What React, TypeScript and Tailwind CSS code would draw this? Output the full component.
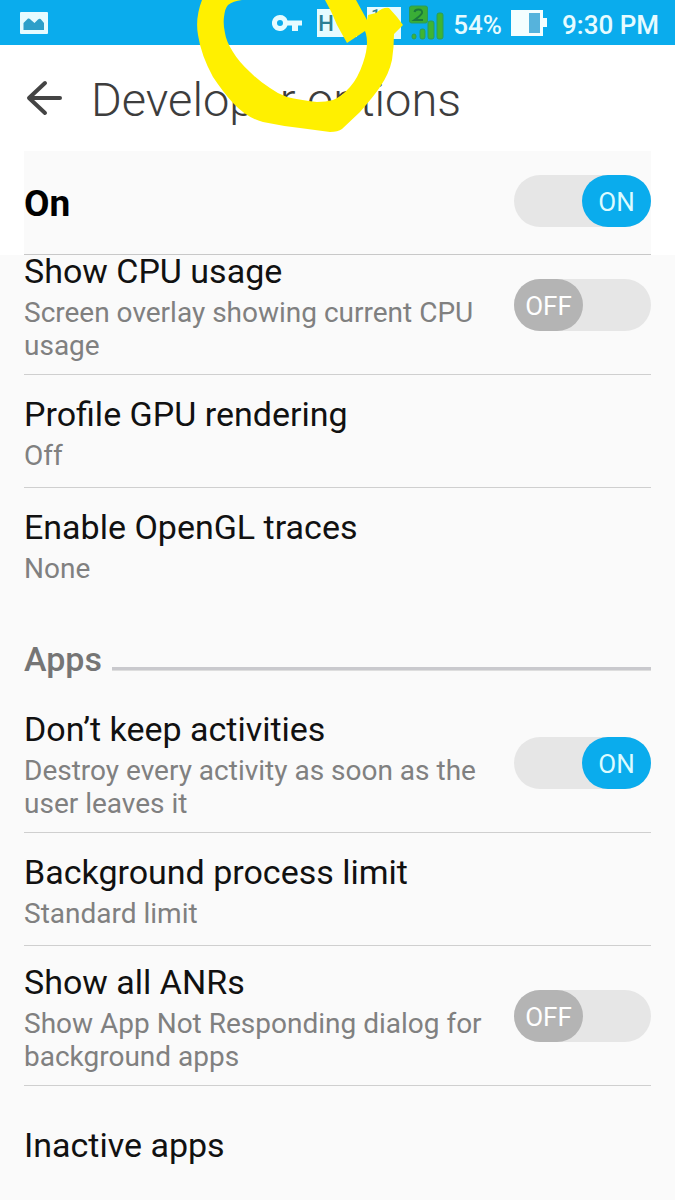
// ============================================================
// DEVELOPER OPTIONS — settings screen
// StatusBar: icons, battery and clock
// Toggle: ON/OFF switch
// SettingRow: title + summary, optional switch
// ============================================================

import { useId, useState } from "react";

// ── Props ──
interface ToggleProps {
  id: string;
  label: string;
  initial: boolean;
}

interface Setting {
  title: string;
  summary?: string;
  toggle?: boolean; // initial switch state, left out for plain rows
}

interface SettingRowProps extends Setting {
  last?: boolean;
}

const MONITORING: Setting[] = [
  { title: "Show CPU usage", summary: "Screen overlay showing current CPU usage", toggle: false },
  { title: "Profile GPU rendering", summary: "Off" },
  { title: "Enable OpenGL traces", summary: "None" },
];

const APPS: Setting[] = [
  { title: "Don’t keep activities", summary: "Destroy every activity as soon as the user leaves it", toggle: true },
  { title: "Background process limit", summary: "Standard limit" },
  { title: "Show all ANRs", summary: "Show App Not Responding dialog for background apps", toggle: false },
  { title: "Inactive apps" },
];

// ── StatusBar ──
function StatusBar() {
  return (
    <div className="flex h-[45px] items-center bg-[#0aaced] pl-5 pr-4 text-[26px] font-medium leading-8 text-[#e6fbff]">
      {/* Screenshot notification */}
      <svg className="h-[22px] w-7" viewBox="0 0 28 22" aria-hidden="true">
        <rect width="28" height="22" rx="1" fill="#e6fbff" />
        <path d="M3.500 18V11L8 6.500Q10 6 11 8L14.500 11L18 7.500Q20 6 21.500 8L24 11V18Z" fill="#2d9fc9" />
      </svg>

      <div className="ml-auto flex items-center">
        {/* VPN key */}
        <svg className="h-4 w-[30px]" viewBox="0 0 30 16" fill="#e6fbff" aria-hidden="true">
          <path fillRule="evenodd" d="M8 0a8 8 0 1 0 7.500 10.500H20V16H26V10.500H30V5.500H15.500A8 8 0 0 0 8 0ZM8 5a3 3 0 1 1 0 6a3 3 0 0 1 0-6Z" />
        </svg>
        {/* Network badges */}
        <span className="ml-[15px] flex h-7 w-10 items-center bg-[#e6fbff] pl-px pt-0.5 text-[22px] font-medium text-[#2b7f94]">H</span>
        <span className="ml-[10px] flex h-8 w-[34px] items-start bg-[#e6fbff] pl-1 pt-px text-base font-medium leading-4 text-[#2b7f94]">1</span>
        {/* Second SIM signal */}
        <svg className="ml-2 h-9 w-9" viewBox="0 0 36 36" aria-hidden="true">
          <rect x="0.500" y="1" width="18" height="17" rx="2" fill="#3aae36" stroke="#2a9d5a" />
          <path d="M5.500 7Q6 4.500 9.500 4.500Q13.500 4.500 13 8Q12.500 10 5.500 15H14" fill="none" stroke="#1b7a3c" strokeWidth="2" />
          <g fill="#3fb532" stroke="#2a9d5a" strokeWidth="1">
            <rect x="3" y="29" width="4" height="5" rx="2" />
            <rect x="11" y="24" width="5" height="10" rx="2" />
            <rect x="19" y="16" width="6" height="18" rx="2" />
            <rect x="28" y="8" width="6" height="26" rx="2" />
          </g>
        </svg>
        <span className="ml-2 pt-1">54%</span>
        {/* Battery */}
        <svg className="ml-[9px] h-[26px] w-9" viewBox="0 0 36 26" aria-hidden="true">
          <path d="M0 0H32V8H36V17H32V26H0Z" fill="#f4feff" />
          <rect x="18" y="3" width="11" height="20" fill="#56b3dc" />
        </svg>
        <span className="ml-[15px] pt-1">9:30 PM</span>
      </div>
    </div>
  );
}

// ── Marker: hand-drawn loop around the key icon ──
function Marker() {
  return (
    <svg className="pointer-events-none absolute right-[270px] top-0 z-20 h-[134px] w-[210px]" viewBox="195 0 210 134" fill="#fff000" aria-hidden="true">
      <path d="M202 0Q195 18 198 35Q201 55 213 77Q223 92 233 103Q247 118 263 122Q282 126 300 128L330 132Q338 132 342 129L360 112Q374 96 380 87Q389 74 392 60Q394 47 394 34L403 25L397 17L389 8Q383 7 376 13L368 15L367 20L356 0H325Q332 12 337 25L347 43L365 31L366 34Q369 46 363 63Q358 78 350 87Q341 97 333 100Q326 102 317 102Q300 100 287 97Q278 94 270 88Q260 82 250 72Q239 62 233 52Q226 41 225 33Q223 24 224 17Q225 8 228 5Q233 1 242 0Z" />
    </svg>
  );
}

// ── Toggle ──
function Toggle({ id, label, initial }: ToggleProps) {
  const [on, setOn] = useState(initial);

  return (
    <span className="relative block h-[52px] w-[137px] shrink-0">
      <input
        id={id}
        type="checkbox"
        role="switch"
        aria-label={label}
        checked={on}
        onChange={() => setOn((v) => !v)}
        className="block h-full w-full cursor-pointer appearance-none rounded-full bg-[#e6e6e6]"
      />
      <span
        aria-hidden="true"
        className={`pointer-events-none absolute inset-y-0 flex w-[69px] items-center justify-center rounded-full pt-0.5 text-[26px] leading-8 ${
          on ? "right-0 bg-[#0aaced] text-[#dcfbff]" : "left-0 bg-[#b4b4b4] text-white"
        }`}
      >
        {on ? "ON" : "OFF"}
      </span>
    </span>
  );
}

// ── SettingRow ──
function SettingRow({ title, summary, toggle, last }: SettingRowProps) {
  const id = useId();
  const text = (
    <>
      <span className="block text-[34px] leading-8 text-[#111111]">{title}</span>
      {summary && <span className="mt-[9px] block text-[28px] leading-[33px] text-[#808080]">{summary}</span>}
    </>
  );

  return (
    <li
      className={`flex items-center gap-6 border-b py-3 ${summary ? "min-h-[113px]" : "min-h-[110px]"} ${
        last ? "border-transparent" : "border-[#cfcfcf]"
      }`}
    >
      {toggle === undefined ? (
        <button type="button" className="flex-1 cursor-pointer pt-2 text-left">{text}</button>
      ) : (
        <>
          <label htmlFor={id} className="flex-1 cursor-pointer pt-2">{text}</label>
          <Toggle id={id} label={title} initial={toggle} />
        </>
      )}
    </li>
  );
}

export default function App() {
  return (
    <div className="relative min-h-screen overflow-hidden bg-[#fafafa] font-[Roboto,sans-serif]">
      <Marker />

      {/* Header stays above the scrolled list */}
      <header className="relative z-10 bg-white">
        <StatusBar />
        <div className="flex h-[106px] items-center gap-7 pl-[26px]">
          <button type="button" aria-label="Back" className="cursor-pointer">
            <svg className="h-9 w-[37px]" viewBox="0 0 37 36" fill="none" stroke="#444444" strokeWidth="4" strokeLinecap="round" strokeLinejoin="round" aria-hidden="true">
              <path d="M34 18H4M19 3L3 18L19 33" />
            </svg>
          </button>
          <h1 className="whitespace-nowrap pt-1 text-[47px] font-light leading-[56px] text-[#3d3d3d]">Developer options</h1>
        </div>
        <div className="mx-6 flex h-[104px] items-center justify-between border-b border-[#c8c8c8] bg-[#fafafa] pb-1">
          <label htmlFor="master" className="pt-1.5 text-[37px] font-bold leading-10 text-black">On</label>
          <Toggle id="master" label="On" initial={true} />
        </div>
      </header>

      <main className="px-6">
        {/* First row is partly scrolled under the header */}
        <ul className="-mt-5">
          {MONITORING.map((s, i) => (
            <SettingRow key={s.title} {...s} last={i === MONITORING.length - 1} />
          ))}
        </ul>

        <div className="flex h-[92px] items-center gap-[10px] pt-6">
          <h2 className="text-[34px] font-medium leading-8 text-[#757575]">Apps</h2>
          <div className="mt-5 h-1 flex-1 border-b border-[#dedede] bg-[#c9c9cd]" />
        </div>

        <ul>
          {APPS.map((s, i) => (
            <SettingRow key={s.title} {...s} last={i === APPS.length - 1} />
          ))}
        </ul>
      </main>
    </div>
  );
}
